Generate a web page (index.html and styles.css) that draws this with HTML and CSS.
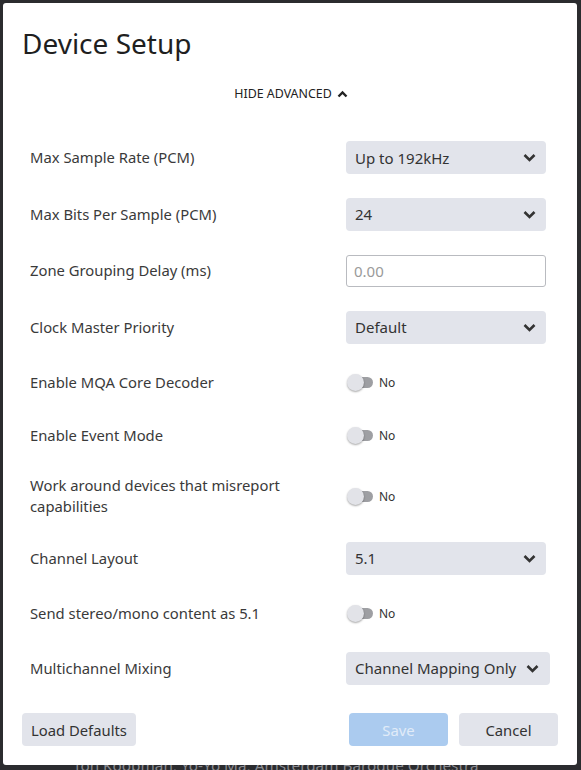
FILE: index.html
```html
<!DOCTYPE html>
<html>
<head>
<meta charset="utf-8">
<link rel="stylesheet" href="styles.css">
</head>
<body>
<div class="backdrop">
  <div class="behind">Ton Koopman, Yo-Yo Ma, Amsterdam Baroque Orchestra</div>
  <div class="dialog">
    <h1 class="title">Device Setup</h1>
    <div class="advanced">HIDE ADVANCED
      <svg class="up" width="11" height="8" viewBox="0 0 11 8"><path d="M1.5 6.5 L5.5 2.5 L9.5 6.5" fill="none" stroke="#222" stroke-width="2.4"/></svg>
    </div>
    <div class="rows">
      <div class="row"><div class="label">Max Sample Rate (PCM)</div>
        <div class="select"><span>Up to 192kHz</span><svg class="chev" width="13" height="9" viewBox="0 0 13 9"><path d="M1.5 2 L6.5 7 L11.5 2" fill="none" stroke="#333" stroke-width="2.6"/></svg></div></div>
      <div class="row"><div class="label">Max Bits Per Sample (PCM)</div>
        <div class="select"><span>24</span><svg class="chev" width="13" height="9" viewBox="0 0 13 9"><path d="M1.5 2 L6.5 7 L11.5 2" fill="none" stroke="#333" stroke-width="2.6"/></svg></div></div>
      <div class="row"><div class="label">Zone Grouping Delay (ms)</div>
        <div class="input">0.00</div></div>
      <div class="row"><div class="label">Clock Master Priority</div>
        <div class="select"><span>Default</span><svg class="chev" width="13" height="9" viewBox="0 0 13 9"><path d="M1.5 2 L6.5 7 L11.5 2" fill="none" stroke="#333" stroke-width="2.6"/></svg></div></div>
      <div class="row trow"><div class="label">Enable MQA Core Decoder</div>
        <div class="toggle"><span class="track"><span class="knob"></span></span><span class="tlabel">No</span></div></div>
      <div class="row trow"><div class="label">Enable Event Mode</div>
        <div class="toggle"><span class="track"><span class="knob"></span></span><span class="tlabel">No</span></div></div>
      <div class="row tall"><div class="label">Work around devices that misreport capabilities</div>
        <div class="toggle"><span class="track"><span class="knob"></span></span><span class="tlabel">No</span></div></div>
      <div class="row"><div class="label">Channel Layout</div>
        <div class="select"><span>5.1</span><svg class="chev" width="13" height="9" viewBox="0 0 13 9"><path d="M1.5 2 L6.5 7 L11.5 2" fill="none" stroke="#333" stroke-width="2.6"/></svg></div></div>
      <div class="row trow"><div class="label">Send stereo/mono content as 5.1</div>
        <div class="toggle"><span class="track"><span class="knob"></span></span><span class="tlabel">No</span></div></div>
      <div class="row"><div class="label">Multichannel Mixing</div>
        <div class="select wide"><span>Channel Mapping Only</span><svg class="chev" width="13" height="9" viewBox="0 0 13 9"><path d="M1.5 2 L6.5 7 L11.5 2" fill="none" stroke="#333" stroke-width="2.6"/></svg></div></div>
    </div>
    <div class="footer">
      <button class="btn">Load Defaults</button>
      <div class="spacer"></div>
      <button class="btn save">Save</button>
      <button class="btn cancel">Cancel</button>
    </div>
  </div>
</div>
</body>
</html>
```
FILE: styles.css
```css
html, body {
  margin: 0;
  padding: 0;
  background: #2b2c2f;
  font-family: "Noto Sans", "Open Sans", sans-serif;
  color: #333;
}
.backdrop {
  position: relative;
  width: 581px;
  height: 770px;
  overflow: hidden;
  padding: 3px 4px 0 3px;
  box-sizing: border-box;
}
.behind {
  position: absolute;
  left: 73px;
  top: 755px;
  font-size: 15.3px;
  color: #8a8b90;
  white-space: nowrap;
}
.dialog {
  position: relative;
  background: #fff;
  height: 762px;
  border-radius: 3px;
  box-sizing: border-box;
  padding: 24px 19px 0 19px;
  display: flex;
  flex-direction: column;
}
.title {
  margin: 0;
  font-size: 28px;
  font-weight: 400;
  line-height: 32px;
  color: #1f1f1f;
}
.advanced {
  margin-top: 26px;
  display: flex;
  justify-content: center;
  align-items: center;
  gap: 5px;
  font-size: 12.4px;
  line-height: 18px;
  color: #222;
  padding-left: 2px;
}
.up { margin-top: -1px; }
.rows {
  margin-top: 38px;
  display: flex;
  flex-direction: column;
  gap: 23.5px;
  padding: 0 8px;
}
.row {
  display: flex;
  align-items: center;
  min-height: 33px;
}
.row.trow { min-height: 30px; }
.row.tall { min-height: 44px; }
.label {
  width: 316px;
  font-size: 14.8px;
  line-height: 21px;
  color: #3a3a3a;
  padding-right: 20px;
  box-sizing: border-box;
}
.select {
  width: 200px;
  height: 33px;
  background: #e2e4eb;
  border-radius: 4px;
  display: flex;
  align-items: center;
  justify-content: space-between;
  padding: 0 10px 0 9px;
  box-sizing: border-box;
  font-size: 15px;
  color: #333;
}
.select.wide { width: 204px; padding-right: 11px; }
.chev { display: block; }
.input {
  width: 200px;
  height: 32px;
  border: 1px solid #b9bbc0;
  border-radius: 3px;
  box-sizing: border-box;
  display: flex;
  align-items: center;
  padding-left: 7px;
  font-size: 15px;
  color: #9a9a9a;
}
.toggle {
  display: flex;
  align-items: center;
  gap: 6px;
  padding-left: 2px;
}
.track {
  position: relative;
  width: 25px;
  height: 11px;
  background: #9e9fa3;
  border-radius: 6px;
  display: block;
}
.knob {
  position: absolute;
  left: -1px;
  top: -3px;
  width: 17px;
  height: 17px;
  border-radius: 50%;
  background: #e2e3e8;
  box-shadow: 0 1px 2px rgba(0,0,0,0.35);
}
.tlabel {
  font-size: 12px;
  color: #333;
}
.footer {
  margin-top: auto;
  margin-bottom: 19px;
  display: flex;
  align-items: center;
}
.spacer { flex: 1; }
.btn {
  font-family: "Noto Sans", "Open Sans", sans-serif;
  font-size: 14.8px;
  height: 33px;
  border: none;
  border-radius: 4px;
  background: #e2e4eb;
  color: #333;
  padding: 0 9px;
  margin: 0;
}
.save {
  width: 99px;
  background: #abcbef;
  color: #e1ebf8;
  margin-right: 11px;
}
.cancel {
  width: 99px;
}
```
